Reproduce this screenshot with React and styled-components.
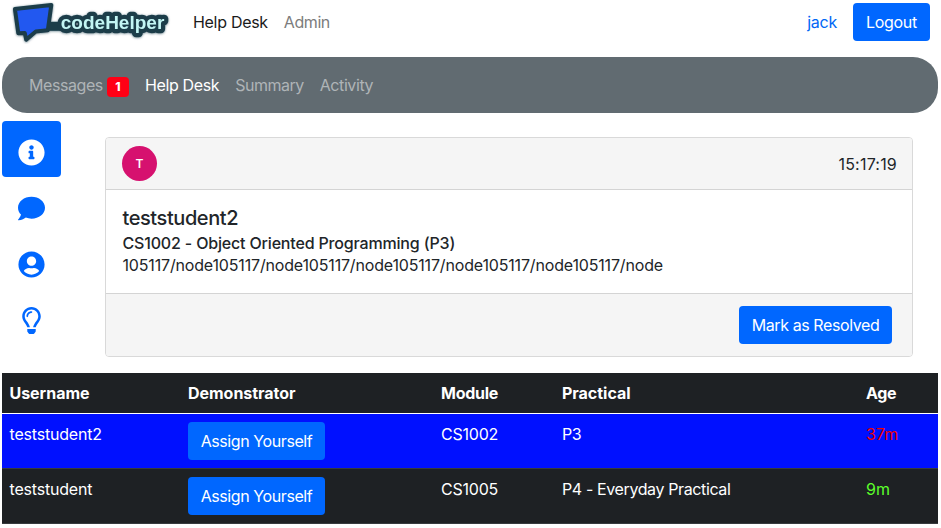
import React from "react";
import styled, { createGlobalStyle } from "styled-components";
import { FaInfoCircle, FaComment, FaUserCircle, FaRegLightbulb } from "react-icons/fa";

const GlobalStyle = createGlobalStyle`
  *, *::before, *::after { box-sizing: border-box; }
  body {
    margin: 0;
    background: #fff;
    color: #212529;
    font: 400 16px/24px Inter, "Liberation Sans", sans-serif;
    letter-spacing: -0.34px;
  }
`;

const Page = styled.div`
  width: 936px;
  margin-left: 2px;
`;

const TopBar = styled.header`
  display: flex;
  align-items: center;
  height: 57px;
  padding: 0 8px 13px 7px;
`;

const Logo = styled.svg`
  display: block;
  flex: none;
  margin-right: 19px;
`;

const Nav = styled.nav`
  display: flex;
  align-items: center;
  gap: 16px;
`;

const TopLink = styled.a`
  color: ${(p) => (p.$active ? "#1b1b1b" : "#7c7c7c")};
  letter-spacing: ${(p) => p.$spacing || "-0.3px"};
`;

const Account = styled.div`
  display: flex;
  align-items: center;
  gap: 16px;
  margin-left: auto;
`;

const UserLink = styled.a`
  color: #0067f5;
  letter-spacing: -0.25px;
`;

const Button = styled.button`
  height: 38px;
  width: ${(p) => p.$width};
  padding: 0;
  border: 0;
  border-radius: 4px;
  background: #0067ff;
  color: #fff;
  font: inherit;
  letter-spacing: ${(p) => p.$spacing || "-0.41px"};
  white-space: nowrap;
`;

const SubBar = styled.nav`
  display: flex;
  align-items: center;
  gap: 16px;
  height: 56px;
  padding-left: 27px;
  border-radius: 25px;
  background: #616b71;
`;

const SubLink = styled.a`
  display: flex;
  align-items: center;
  gap: 4px;
  color: ${(p) => (p.$active ? "#fff" : "#afb4b7")};
  letter-spacing: ${(p) => p.$spacing || "-0.42px"};
`;

const Badge = styled.span`
  width: 22px;
  height: 20px;
  margin-top: 4px;
  border-radius: 4px;
  background: #ff0015;
  color: #fff;
  font-size: 12px;
  font-weight: 800;
  line-height: 20px;
  text-align: center;
  letter-spacing: 0;
`;

const Main = styled.main`
  display: flex;
  align-items: flex-start;
  height: 260px;
  padding-top: 8px;
`;

const Sidebar = styled.div`
  display: flex;
  flex-direction: column;
  width: 59px;
`;

const SideTab = styled.button`
  display: flex;
  align-items: center;
  justify-content: center;
  height: 56px;
  padding: 7px 0 0;
  border: 0;
  border-radius: 4px;
  background: ${(p) => (p.$active ? "#0067ff" : "transparent")};
  color: ${(p) => (p.$active ? "#fff" : "#0067ff")};
  font-size: 27px;
`;

const Card = styled.section`
  width: 808px;
  margin: 16px 0 0 44px;
  border: 1px solid #d9d9d9;
  border-radius: 4px;
  overflow: hidden;
`;

const CardHeader = styled.div`
  display: flex;
  align-items: center;
  justify-content: space-between;
  height: 52px;
  padding: 0 15px 0 16px;
  border-bottom: 1px solid #d4d4d4;
  background: #f5f5f5;
`;

const Avatar = styled.span`
  width: 35px;
  height: 35px;
  border-radius: 50%;
  background: #d6116f;
  color: #fff;
  font-size: 12px;
  font-weight: 600;
  line-height: 35px;
  text-align: center;
  letter-spacing: 0;
`;

const Time = styled.span`
  letter-spacing: 0.2px;
`;

const CardBody = styled.div`
  height: 103px;
  padding: 16px 16px 16px 16.5px;
  line-height: 22px;
`;

const Student = styled.h5`
  margin: 0 0 2px;
  font-size: 20px;
  font-weight: 500;
  line-height: 24px;
  letter-spacing: -0.42px;
`;

const Module = styled.div`
  font-weight: 500;
  letter-spacing: -0.17px;
`;

const Location = styled.div`
  letter-spacing: -0.165px;
`;

const CardFooter = styled.div`
  display: flex;
  justify-content: flex-end;
  height: 63px;
  padding: 12px 20px;
  border-top: 1px solid #d4d4d4;
  background: #f5f5f5;
`;

const Table = styled.div`
  background: #1e2124;
  color: #fff;
`;

const Row = styled.div`
  display: grid;
  grid-template-columns: 178.5px 253px 121px 304px 79.5px;
  height: ${(p) => (p.$head ? "41px" : "55px")};
  padding-top: 8px;
  border-bottom: 1px solid ${(p) => (p.$head ? "#fff" : "#373b3e")};
  background: ${(p) => (p.$selected ? "#0010ff" : "transparent")};
  font-weight: ${(p) => (p.$head ? 700 : 400)};
  letter-spacing: ${(p) => (p.$head ? "-0.03px" : "-0.3px")};
`;

const Cell = styled.div`
  padding: 0 7.5px;
  white-space: nowrap;
  color: ${(p) => p.$color || "inherit"};
  letter-spacing: ${(p) => p.$spacing || "inherit"};
`;

const tabs = [FaInfoCircle, FaComment, FaUserCircle, FaRegLightbulb];

const requests = [
  { user: "teststudent2", module: "CS1002", practical: "P3", age: "37m", color: "#f00000", selected: true },
  { user: "teststudent", module: "CS1005", practical: "P4 - Everyday Practical", age: "9m", color: "#5cff2b" },
];

function CodeHelperLogo() {
  return (
    <Logo width="165" height="44" viewBox="9 0 165 44" role="img" aria-label="codeHelper">
      <defs>
        <filter id="logo-shadow" x="-10%" y="-20%" width="120%" height="140%">
          <feDropShadow dx="0" dy="0.5" stdDeviation="0.9" floodColor="#16333f" floodOpacity="0.6" />
        </filter>
      </defs>
      <g filter="url(#logo-shadow)">
        <path d="M14.9 9 51.3 4.9 47.8 30.2 35.8 31.5 26.2 39.6 24.8 33.1 18.3 33.3Z" fill="#2459f0" stroke="#1b3c4a" strokeWidth="4" strokeLinejoin="round" />
        <path d="M48 26.3H62" stroke="#1b3c4a" strokeWidth="9" />
        <text x="60.8" y="29.3" textLength="103.5" lengthAdjust="spacingAndGlyphs" fontFamily='"Liberation Sans", Arial, sans-serif' fontSize="19" fontWeight="700" letterSpacing="0" fill="#c3f6f4" stroke="#1b3c4a" strokeWidth="8.4" strokeLinejoin="round" paintOrder="stroke">codeHelper</text>
      </g>
    </Logo>
  );
}

export default function App() {
  return (
    <Page>
      <GlobalStyle />
      <TopBar>
        <CodeHelperLogo />
        <Nav>
          <TopLink $active>Help Desk</TopLink>
          <TopLink $spacing="-0.42px">Admin</TopLink>
        </Nav>
        <Account>
          <UserLink>jack</UserLink>
          <Button $width="77px" $spacing="-0.29px">Logout</Button>
        </Account>
      </TopBar>
      <SubBar>
        <SubLink>Messages <Badge>1</Badge></SubLink>
        <SubLink $active $spacing="-0.35px">Help Desk</SubLink>
        <SubLink $spacing="-0.5px">Summary</SubLink>
        <SubLink>Activity</SubLink>
      </SubBar>
      <Main>
        <Sidebar>
          {tabs.map((Icon, i) => (
            <SideTab key={i} $active={i === 0}><Icon /></SideTab>
          ))}
        </Sidebar>
        <Card>
          <CardHeader>
            <Avatar>T</Avatar>
            <Time>15:17:19</Time>
          </CardHeader>
          <CardBody>
            <Student>teststudent2</Student>
            <Module>CS1002 - Object Oriented Programming (P3)</Module>
            <Location>105117/node105117/node105117/node105117/node105117/node105117/node</Location>
          </CardBody>
          <CardFooter>
            <Button $width="153px">Mark as Resolved</Button>
          </CardFooter>
        </Card>
      </Main>
      <Table>
        <Row $head>
          <Cell>Username</Cell>
          <Cell>Demonstrator</Cell>
          <Cell $spacing="-0.25px">Module</Cell>
          <Cell>Practical</Cell>
          <Cell $spacing="-0.4px">Age</Cell>
        </Row>
        {requests.map((r) => (
          <Row key={r.user} $selected={r.selected}>
            <Cell $spacing="-0.2px">{r.user}</Cell>
            <Cell><Button $width="137px">Assign Yourself</Button></Cell>
            <Cell $spacing="-0.22px">{r.module}</Cell>
            <Cell $spacing="-0.38px">{r.practical}</Cell>
            <Cell $color={r.color} $spacing="0">{r.age}</Cell>
          </Row>
        ))}
      </Table>
    </Page>
  );
}
